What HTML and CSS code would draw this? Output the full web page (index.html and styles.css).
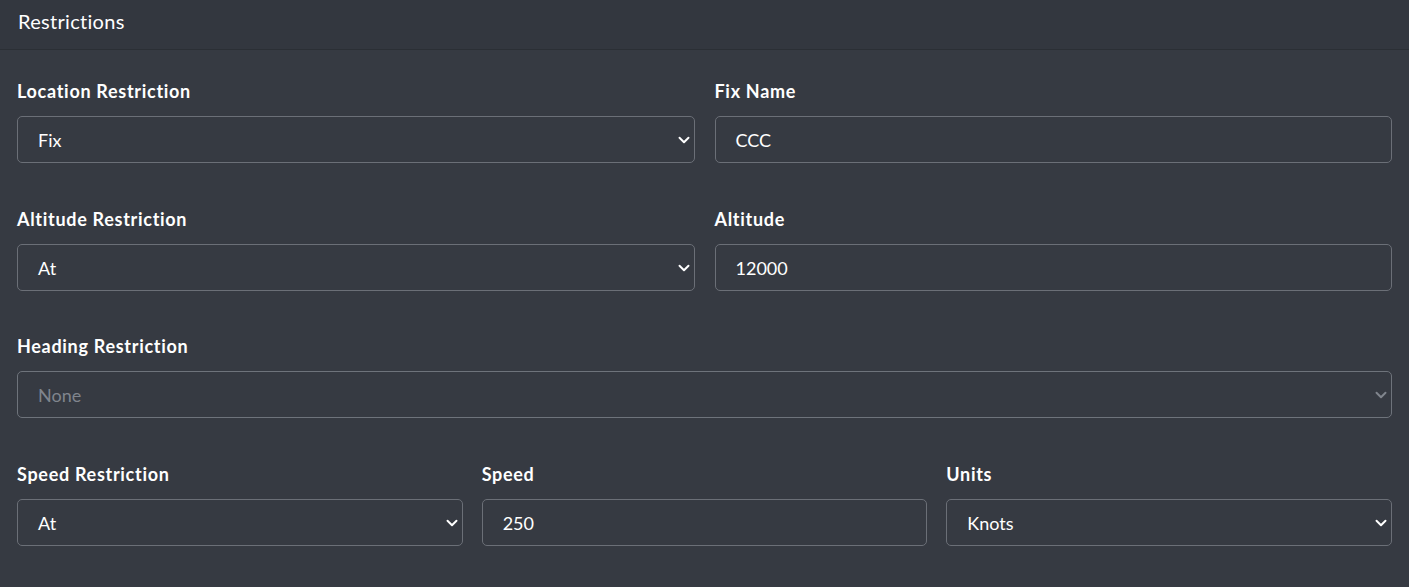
FILE: index.html
```html
<!DOCTYPE html>
<html lang="en">
<head>
    <meta charset="UTF-8">
    <meta name="viewport" content="width=device-width, initial-scale=1.0">
    <title>Restrictions</title>
    <link rel="stylesheet" href="styles.css">
</head>
<body>
    <div class="card">
        <div class="card-header">Restrictions</div>
        <div class="card-body">
            <div class="row cols-2">
                <div class="field">
                    <label>Location Restriction</label>
                    <div class="select">Fix <svg class="chevron" viewBox="0 0 16 16"><path d="m2 5 6 6 6-6"/></svg></div>
                </div>
                <div class="field">
                    <label>Fix Name</label>
                    <div class="input">CCC</div>
                </div>
            </div>
            <div class="row cols-2">
                <div class="field">
                    <label>Altitude Restriction</label>
                    <div class="select">At <svg class="chevron" viewBox="0 0 16 16"><path d="m2 5 6 6 6-6"/></svg></div>
                </div>
                <div class="field">
                    <label>Altitude</label>
                    <div class="input">12000</div>
                </div>
            </div>
            <div class="row">
                <div class="field">
                    <label>Heading Restriction</label>
                    <div class="select disabled">None <svg class="chevron" viewBox="0 0 16 16"><path d="m2 5 6 6 6-6"/></svg></div>
                </div>
            </div>
            <div class="row cols-3">
                <div class="field">
                    <label>Speed Restriction</label>
                    <div class="select">At <svg class="chevron" viewBox="0 0 16 16"><path d="m2 5 6 6 6-6"/></svg></div>
                </div>
                <div class="field">
                    <label>Speed</label>
                    <div class="input">250</div>
                </div>
                <div class="field">
                    <label>Units</label>
                    <div class="select">Knots <svg class="chevron" viewBox="0 0 16 16"><path d="m2 5 6 6 6-6"/></svg></div>
                </div>
            </div>
        </div>
    </div>
</body>
</html>
```

FILE: styles.css
```css
body { margin: 0; padding: 0; background-color: #363a42; font-family: Lato, "Open Sans", sans-serif; color: #fff; }
.card { background-color: #363a42; }
.card-header { background-color: #33373f; border-bottom: 1px solid #2b2f35; padding: 6px 18px 13px; font-size: 20px; letter-spacing: 0.3px; line-height: 30px; height: 30px; }
.card-body { padding: 28px 17px 0 17px; }
.row { display: grid; grid-template-columns: 1fr; gap: 20px; margin-bottom: 42.6px; }
.cols-2 { grid-template-columns: 1fr 1fr; }
.cols-3 { grid-template-columns: 1fr 1fr 1fr; gap: 19px; }
label { display: block; font-weight: bold; font-size: 18px; letter-spacing: 0.7px; line-height: 27px; margin-bottom: 11px; }
.select, .input { box-sizing: border-box; height: 47px; border: 1px solid #6b6f77; border-radius: 5px; padding: 1px 20px 0; font-size: 18px; line-height: 45px; position: relative; }
.chevron { position: absolute; right: 4px; top: 17px; width: 12px; height: 12px; fill: none; stroke: #fff; stroke-width: 2.6; stroke-linecap: round; stroke-linejoin: round; }
.select.disabled { color: #80858d; border-color: #6e737b; }
.select.disabled .chevron { stroke: #80858d; }
```
